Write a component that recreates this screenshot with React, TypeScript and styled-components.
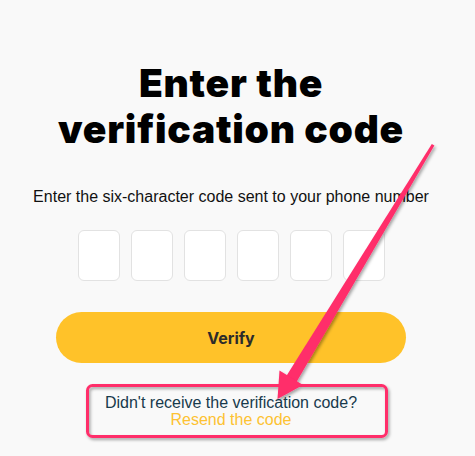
import React from "react";
import styled, { createGlobalStyle } from "styled-components";

const GlobalStyle = createGlobalStyle`
  html, body {
    margin: 0;
    padding: 0;
    background: #f9f9f9;
  }
  * { box-sizing: border-box; }
`;

const Page = styled.div`
  position: relative;
  width: 475px;
  height: 456px;
  overflow: hidden;
  background: #f9f9f9;
`;

const Content = styled.main`
  width: 462px;
  display: flex;
  flex-direction: column;
  align-items: center;
  padding-top: 60px;
`;

const Title = styled.h1`
  margin: 0;
  font-family: Inter, "DejaVu Sans", sans-serif;
  font-weight: 900;
  font-size: 39px;
  letter-spacing: 0.75px;
  line-height: 46px;
  color: #000;
  text-align: center;
`;

const Subtitle = styled.p`
  margin: 36px 0 0;
  font-family: "Liberation Sans", Arial, sans-serif;
  font-size: 16px;
  line-height: 18px;
  color: #111;
`;

const CodeRow = styled.div`
  display: flex;
  gap: 11px;
  margin-top: 24px;
`;

const CodeBox = styled.input`
  width: 42px;
  height: 51px;
  border: 1px solid #e2e2e2;
  border-radius: 6px;
  background: #fff;
  outline: none;
  padding: 0;
`;

const VerifyButton = styled.button`
  width: 350px;
  height: 51px;
  margin-top: 31px;
  border: none;
  border-radius: 26px;
  background: #ffc229;
  font-family: Inter, "DejaVu Sans", sans-serif;
  font-weight: 700;
  font-size: 16px;
  color: #2b2b2b;
  cursor: pointer;
`;

const Resend = styled.div`
  margin-top: 31px;
  font-family: "Liberation Sans", Arial, sans-serif;
  font-size: 16px;
  line-height: 17px;
  text-align: center;
  color: #173a4c;
`;

const ResendLink = styled.a`
  display: block;
  color: #fdc232;
  text-decoration: none;
`;

const Annotation = styled.svg`
  position: absolute;
  inset: 0;
  pointer-events: none;
`;

export default function App() {
  return (
    <>
      <GlobalStyle />
      <Page>
        <Content>
          <Title>
            Enter the
            <br />
            verification code
          </Title>
          <Subtitle>Enter the six-character code sent to your phone number</Subtitle>
          <CodeRow>
            {Array.from({ length: 6 }).map((_, i) => (
              <CodeBox key={i} maxLength={1} aria-label={`Digit ${i + 1}`} />
            ))}
          </CodeRow>
          <VerifyButton>Verify</VerifyButton>
          <Resend>
            Didn't receive the verification code?
            <ResendLink href="#">Resend the code</ResendLink>
          </Resend>
        </Content>
        <Annotation width="475" height="456" viewBox="0 0 475 456">
          <defs>
            <filter id="sh" x="-20%" y="-20%" width="140%" height="140%">
              <feDropShadow dx="1.5" dy="2" stdDeviation="1.8" floodColor="#000" floodOpacity="0.35" />
            </filter>
          </defs>
          <g filter="url(#sh)">
            <rect x="87.5" y="385.5" width="299" height="51" rx="5" fill="none" stroke="#ff2d6b" strokeWidth="3" />
            <polygon
              points="431.8,144 434.4,145.6 296.5,382 286.5,375.8"
              fill="#ff2d6b"
            />
            <polygon points="277.5,399 279.5,370.5 303,385" fill="#ff2d6b" />
          </g>
        </Annotation>
      </Page>
    </>
  );
}
